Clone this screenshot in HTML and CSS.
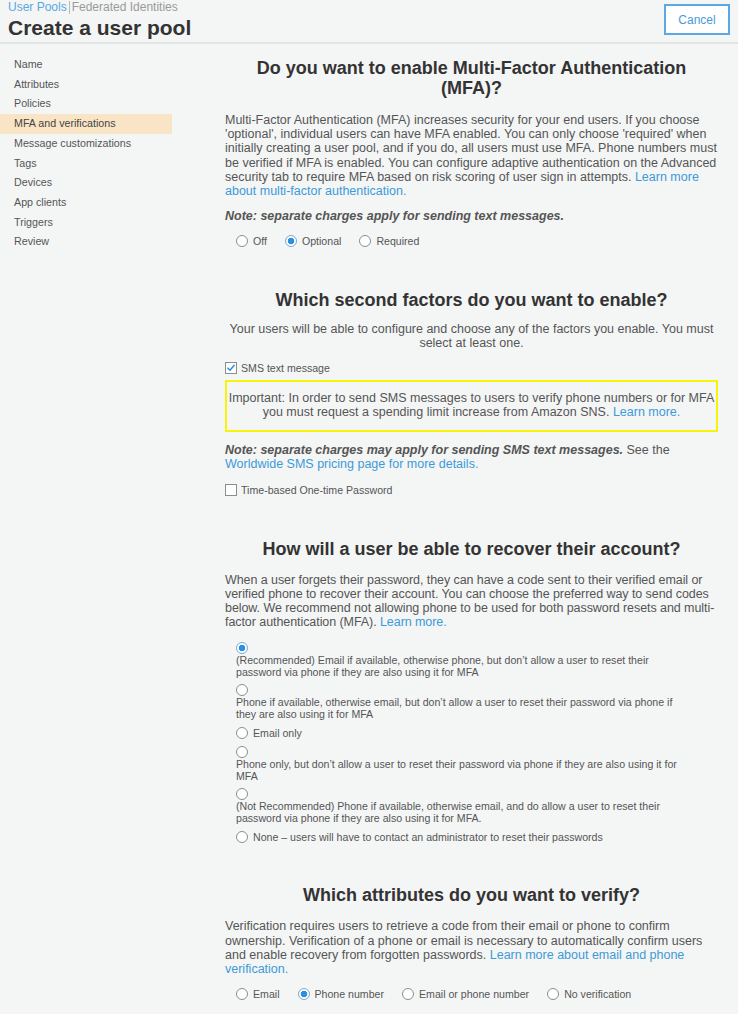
FILE: index.html
```html
<!DOCTYPE html>
<html>
<head>
<meta charset="utf-8">
<link rel="stylesheet" href="styles.css">
</head>
<body>
<header class="top">
  <div class="top-left">
    <div class="crumbs"><a class="crumb-link">User Pools</a><span class="crumb-sep"></span><span class="crumb-muted">Federated Identities</span></div>
    <h1 class="title">Create a user pool</h1>
  </div>
  <button class="cancel">Cancel</button>
</header>
<div class="layout">
  <nav class="side">
    <div class="nav-item">Name</div>
    <div class="nav-item">Attributes</div>
    <div class="nav-item">Policies</div>
    <div class="nav-item active">MFA and verifications</div>
    <div class="nav-item">Message customizations</div>
    <div class="nav-item">Tags</div>
    <div class="nav-item">Devices</div>
    <div class="nav-item">App clients</div>
    <div class="nav-item">Triggers</div>
    <div class="nav-item">Review</div>
  </nav>
  <main class="main">
    <section class="sec s1">
      <h2 class="q">Do you want to enable Multi-Factor Authentication (MFA)?</h2>
      <p class="para">Multi-Factor Authentication (MFA) increases security for your end users. If you choose 'optional', individual users can have MFA enabled. You can only choose 'required' when initially creating a user pool, and if you do, all users must use MFA. Phone numbers must be verified if MFA is enabled. You can configure adaptive authentication on the Advanced security tab to require MFA based on risk scoring of user sign in attempts. <a class="link">Learn more about multi-factor authentication.</a></p>
      <p class="note"><b><i>Note: separate charges apply for sending text messages.</i></b></p>
      <div class="inline-radios">
        <label class="opt"><span class="radio"></span>Off</label>
        <label class="opt"><span class="radio on"></span>Optional</label>
        <label class="opt"><span class="radio"></span>Required</label>
      </div>
    </section>

    <section class="sec s2">
      <h2 class="q">Which second factors do you want to enable?</h2>
      <p class="para center">Your users will be able to configure and choose any of the factors you enable. You must select at least one.</p>
      <label class="check-row first"><span class="check on"><svg viewBox="0 0 12 12" width="12" height="12"><path d="M2.3 6.2 L4.8 8.7 L9.8 2.8" fill="none" stroke="#2f8fdf" stroke-width="1.8" stroke-linecap="round" stroke-linejoin="round"/></svg></span>SMS text message</label>
      <div class="important">Important: In order to send SMS messages to users to verify phone numbers or for MFA you must request a spending limit increase from Amazon SNS. <a class="link">Learn more.</a></div>
      <p class="note2"><b><i>Note: separate charges may apply for sending SMS text messages.</i></b> See the <a class="link">Worldwide SMS pricing page for more details.</a></p>
      <label class="check-row"><span class="check"></span>Time-based One-time Password</label>
    </section>

    <section class="sec s3">
      <h2 class="q">How will a user be able to recover their account?</h2>
      <p class="para tight">When a user forgets their password, they can have a code sent to their verified email or verified phone to recover their account. You can choose the preferred way to send codes below. We recommend not allowing phone to be used for both password resets and multi-factor authentication (MFA). <a class="link">Learn more.</a></p>
      <div class="stack">
        <div class="stack-item"><span class="radio on"></span><span class="stack-label">(Recommended) Email if available, otherwise phone, but don’t allow a user to reset their password via phone if they are also using it for MFA</span></div>
        <div class="stack-item"><span class="radio"></span><span class="stack-label">Phone if available, otherwise email, but don’t allow a user to reset their password via phone if they are also using it for MFA</span></div>
        <div class="stack-item row"><span class="radio"></span><span>Email only</span></div>
        <div class="stack-item"><span class="radio"></span><span class="stack-label">Phone only, but don’t allow a user to reset their password via phone if they are also using it for MFA</span></div>
        <div class="stack-item"><span class="radio"></span><span class="stack-label">(Not Recommended) Phone if available, otherwise email, and do allow a user to reset their password via phone if they are also using it for MFA.</span></div>
        <div class="stack-item row"><span class="radio"></span><span>None – users will have to contact an administrator to reset their passwords</span></div>
      </div>
    </section>

    <section class="sec s4">
      <h2 class="q">Which attributes do you want to verify?</h2>
      <p class="para">Verification requires users to retrieve a code from their email or phone to confirm ownership. Verification of a phone or email is necessary to automatically confirm users and enable recovery from forgotten passwords. <a class="link">Learn more about email and phone verification.</a></p>
      <div class="inline-radios">
        <label class="opt"><span class="radio"></span>Email</label>
        <label class="opt"><span class="radio on"></span>Phone number</label>
        <label class="opt"><span class="radio"></span>Email or phone number</label>
        <label class="opt"><span class="radio"></span>No verification</label>
      </div>
    </section>
  </main>
</div>
</body>
</html>
```
FILE: styles.css
```css
html, body {
  margin: 0;
  padding: 0;
  background: #f4f5f5;
  font-family: "Liberation Sans", Arial, sans-serif;
  color: #555;
}
.top {
  display: flex;
  justify-content: space-between;
  align-items: flex-start;
  padding: 0 8px 0 8px;
  height: 42px;
  border-bottom: 2px solid #e3e4e4;
}
.crumbs {
  font-size: 12px;
  line-height: 14px;
  display: flex;
  align-items: center;
}
.crumb-link { color: #5aa8e1; }
.crumb-sep {
  display: inline-block;
  width: 1px;
  height: 13px;
  background: #b9b9b9;
  margin: 0 2px 0 2px;
}
.crumb-muted { color: #9a9a9a; }
.title {
  margin: 2px 0 0;
  font-size: 21px;
  line-height: 24px;
  font-weight: bold;
  color: #333;
}
.cancel {
  margin-top: 4px;
  width: 66px;
  height: 31px;
  border: 2px solid #5ca8e4;
  background: #fff;
  color: #4a9ad8;
  font-family: "Liberation Sans", Arial, sans-serif;
  font-size: 12px;
  padding: 0;
}
.layout {
  display: flex;
}
.side {
  width: 172px;
  padding-top: 11px;
  flex: none;
}
.nav-item {
  font-size: 10.7px;
  line-height: 19.7px;
  padding-left: 14px;
  color: #555;
}
.nav-item.active {
  background: #fae4c6;
  color: #444;
}
.main {
  width: 493px;
  margin-left: 53px;
  padding-top: 14px;
}
.q {
  margin: 0;
  text-align: center;
  font-size: 18px;
  line-height: 20px;
  font-weight: bold;
  color: #333;
}
.para {
  margin: 15px 0 0;
  font-size: 12.5px;
  line-height: 14.2px;
}
.para.center { text-align: center; margin-top: 12px; }
.para.tight { letter-spacing: -0.07px; margin-top: 14px; }
.s4 .para { margin-top: 14px; }
.link { color: #3d9ad8; }
.note {
  margin: 11px 0 0;
  font-size: 12.5px;
  line-height: 14px;
}
.inline-radios {
  display: flex;
  gap: 18px;
  margin: 11px 0 0 11px;
  font-size: 10.6px;
  line-height: 14px;
}
.opt {
  display: flex;
  align-items: center;
  gap: 5px;
}
.radio {
  display: inline-block;
  width: 12px;
  height: 12px;
  box-sizing: border-box;
  border: 1px solid #8d8d8d;
  border-radius: 50%;
  background: #fff;
  flex: none;
}
.radio.on {
  border-color: #7aa9d2;
  background: radial-gradient(circle, #2e8fe0 0 3px, #fff 3.6px);
}
.sec.s2 { margin-top: 42px; }
.sec.s3 { margin-top: 42px; }
.sec.s4 { margin-top: 41px; }
.check-row {
  display: flex;
  align-items: center;
  gap: 4px;
  margin-top: 11px;
  font-size: 10.6px;
  line-height: 14px;
}
.check-row.first { margin-top: 10px; }
.check {
  width: 12px;
  height: 12px;
  box-sizing: border-box;
  border: 1px solid #8d8d8d;
  background: #fff;
  display: inline-flex;
  align-items: center;
  justify-content: center;
  flex: none;
}
.check svg { display: block; }
.important {
  margin-top: 5px;
  border: 2px solid #f7f40a;
  padding: 9px 0 11px;
  text-align: center;
  font-size: 12.5px;
  line-height: 14px;
}
.note2 {
  margin: 11px 0 0;
  font-size: 12.5px;
  line-height: 14.5px;
}
.stack {
  margin: 13px 0 0 11px;
  width: 450px;
  font-size: 10.6px;
  line-height: 12px;
}
.stack-item {
  margin-bottom: 6px;
}
.stack-item .radio { display: block; }
.stack-label { display: block; }
.stack-item.row {
  display: flex;
  align-items: center;
  gap: 5px;
  line-height: 14px;
}
.stack-item.row .radio { display: inline-block; }
```
